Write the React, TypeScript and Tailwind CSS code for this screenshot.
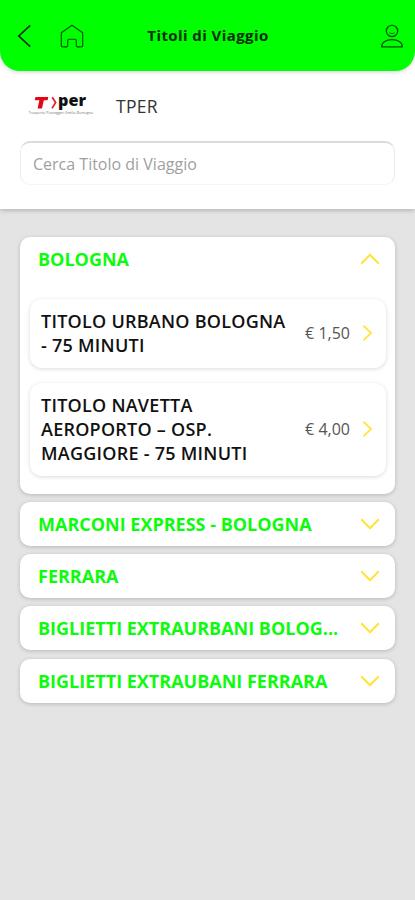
import { useState } from 'react'

interface Ticket {
    lines: string[]
    price: string
}

interface Section {
    title: string
    tickets: Ticket[]
}

const SECTIONS: Section[] = [
    {
        title: 'BOLOGNA',
        tickets: [
            { lines: ['TITOLO URBANO BOLOGNA', '- 75 MINUTI'], price: '€ 1,50' },
            {
                lines: ['TITOLO NAVETTA', 'AEROPORTO – OSP.', 'MAGGIORE - 75 MINUTI'],
                price: '€ 4,00',
            },
        ],
    },
    { title: 'MARCONI EXPRESS - BOLOGNA', tickets: [] },
    { title: 'FERRARA', tickets: [] },
    { title: 'BIGLIETTI EXTRAURBANI BOLOG...', tickets: [] },
    { title: 'BIGLIETTI EXTRAUBANI FERRARA', tickets: [] },
]

const Chevron = ({ className }: { className: string }) => (
    <svg
        viewBox="0 0 20 12"
        className={className}
        fill="none"
        stroke="#ffe43a"
        strokeWidth="2.1"
    >
        <path d="M1.2 1.2 10 10.2 18.8 1.2" />
    </svg>
)

const HomeIcon = () => (
    <svg
        viewBox="0 0 24 24"
        className="w-6 h-6"
        fill="none"
        stroke="#065006"
        strokeWidth="1.1"
        strokeLinejoin="round"
    >
        <path d="M12 1.2 22.7 8.7V21.4Q22.7 22.9 21.2 22.9H17.8Q16.3 22.9 16.3 21.4V16.6Q16.3 15.3 15 15.3H9Q7.7 15.3 7.7 16.6V21.4Q7.7 22.9 6.2 22.9H2.8Q1.3 22.9 1.3 21.4V8.7Z" />
    </svg>
)

const UserIcon = () => (
    <svg
        viewBox="0 0 24 24"
        className="w-6 h-6"
        fill="none"
        stroke="#045004"
        strokeWidth="1.2"
        strokeLinejoin="round"
    >
        <circle cx="12" cy="7" r="5.7" />
        <path d="M9.4 8.7Q12 11 14.6 8.7" strokeWidth="0.8" />
        <path d="M1.6 22.8C1.6 18.4 6.2 15.7 12 15.7S22.4 18.4 22.4 22.8Z" />
    </svg>
)

const TperLogo = () => (
    <svg viewBox="0 0 68 34" className="w-[68px] h-[34px] shrink-0 overflow-visible">
        <g fontFamily="Open Sans, sans-serif">
            <path
                d="M8.5 8H21.3L20.6 11.3H16.8L15 19.6H10.6L12.4 11.3H7.8Z"
                fill="#e30613"
            />
            <path
                d="M25.2 8.2 28.6 13.6 25 19.4"
                fill="none"
                stroke="#e8202b"
                strokeWidth="1.8"
            />
            <text
                x="31"
                y="17.4"
                fontSize="15.5"
                fontWeight="800"
                textLength="28"
                lengthAdjust="spacingAndGlyphs"
                fill="#111"
            >
                per
            </text>
            <text
                x="1.5"
                y="24.8"
                fontSize="3.5"
                textLength="64.5"
                lengthAdjust="spacingAndGlyphs"
                fill="#777"
            >
                Trasporto Passeggeri Emilia-Romagna
            </text>
        </g>
    </svg>
)

const TicketCard = ({ lines, price }: Ticket) => (
    <button className="w-full flex items-center text-left rounded-xl bg-white pt-2.5 pb-[11px] pl-[11px] pr-3 shadow-[0_1px_4px_rgba(0,0,0,0.15)]">
        <span className="flex-1 text-[18px] leading-6 tracking-[0.25px] font-semibold text-[#111]">
            {lines.map(line => (
                <span key={line} className="block whitespace-nowrap">
                    {line}
                </span>
            ))}
        </span>
        <span className="text-base text-[#555] whitespace-nowrap">{price}</span>
        <Chevron className="w-[17px] h-3 -rotate-90 ml-[9px] -mr-0.5" />
    </button>
)

export default function App() {
    const [openIndex, setOpenIndex] = useState(0)

    const toggle = (index: number) =>
        setOpenIndex(prev => (prev === index ? -1 : index))

    return (
        <div className="min-h-screen bg-[#e4e4e4] font-['Open_Sans',sans-serif]">
            <div className="bg-white h-[209px] shadow-[0_1px_5px_rgba(0,0,0,0.25)]">
                {/* Header */}
                <header className="h-[71px] bg-[#00ff00] rounded-b-[20px] grid grid-cols-[1fr_auto_1fr] items-center pl-[17px] pr-[11px] shadow-[0_1px_4px_rgba(0,0,0,0.18)]">
                    <div className="flex items-center">
                        <svg
                            viewBox="0 0 14 24"
                            className="w-3.5 h-6"
                            fill="none"
                            stroke="#032b03"
                            strokeWidth="1.6"
                        >
                            <path d="M13.2 1.3 1.8 12 13.2 22.7" />
                        </svg>
                        <div className="ml-[29px]">
                            <HomeIcon />
                        </div>
                    </div>
                    <h1 className="-ml-[5px] text-[15px] tracking-[0.42px] font-bold text-[#043004]">
                        Titoli di Viaggio
                    </h1>
                    <div className="flex justify-end">
                        <UserIcon />
                    </div>
                </header>

                {/* Operator */}
                <div className="flex items-center pl-[27px] h-[70px]">
                    <TperLogo />
                    <span className="ml-[21px] text-[17.5px] tracking-[0.3px] text-[#333]">TPER</span>
                </div>

                <input
                    type="text"
                    placeholder="Cerca Titolo di Viaggio"
                    className="block mx-5 w-[375px] h-11 rounded-[10px] border border-[#ececec] border-t-2 border-t-[#dadada] border-b-[#f6f6f6] px-3 pt-px text-base text-[#555] placeholder:text-[#a0a0a0] outline-none"
                />
            </div>

            {/* Ticket sections */}
            <div className="flex flex-col gap-[8.3px] px-5 pt-7">
                {SECTIONS.map((section, i) => {
                    const open = openIndex === i && section.tickets.length > 0

                    return (
                        <section
                            key={section.title}
                            className="bg-white rounded-[10px] shadow-[0_1px_4px_rgba(0,0,0,0.2)]"
                        >
                            <button
                                onClick={() => toggle(i)}
                                className="w-full h-11 flex items-center justify-between pl-[18px] pr-[15px]"
                            >
                                <span className="pt-px text-[18px] font-bold text-[#0dfb0d] whitespace-nowrap">
                                    {section.title}
                                </span>
                                <Chevron
                                    className={open ? 'w-5 h-3 rotate-180' : 'w-5 h-3'}
                                />
                            </button>

                            {open && (
                                <div className="flex flex-col gap-[15px] pl-2.5 pr-[9px] pt-[18px] pb-[17.6px]">
                                    {section.tickets.map(ticket => (
                                        <TicketCard key={ticket.price} {...ticket} />
                                    ))}
                                </div>
                            )}
                        </section>
                    )
                })}
            </div>
        </div>
    )
}
